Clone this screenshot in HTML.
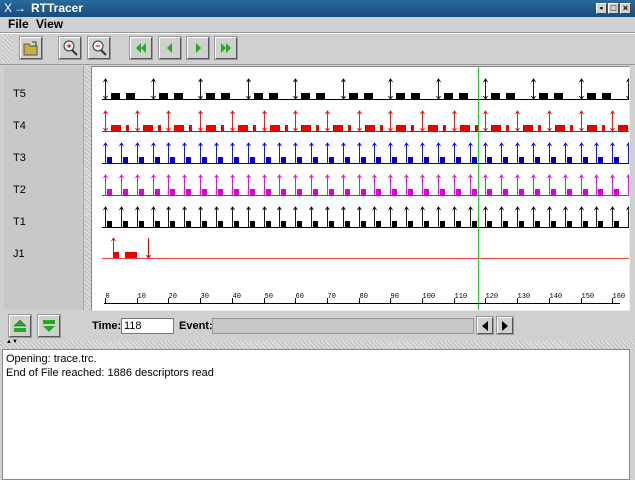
<!DOCTYPE html>
<html><head><meta charset="utf-8"><style>
*{box-sizing:border-box;margin:0;padding:0}
body{width:635px;height:480px;background:#d0d0d0;font-family:"Liberation Sans",sans-serif;font-size:11px;position:relative;overflow:hidden}
.abs{position:absolute}
.title{left:0;top:0;width:635px;height:17px;background:linear-gradient(#2a6a9c,#164d7e);color:#fff;font-weight:bold;font-size:12px}
.btn{position:absolute;width:22px;height:22px;border:1px solid #fff;border-right-color:#555;border-bottom-color:#555;background:#d0d0d0;outline:1px solid #999}
.wb{position:absolute;top:3px;width:11px;height:11px;background:#d0d0d0;border:1px solid #fff;border-right-color:#444;border-bottom-color:#444;font-size:9px;line-height:9px;text-align:center;color:#000;font-weight:bold}
.lbl{position:absolute;left:9px;font-size:11px}
</style></head><body>
<div class="abs title"><span style="position:absolute;left:4px;top:1px;font-weight:normal">X</span><span style="position:absolute;left:14px;top:1px">→</span><span style="position:absolute;left:31px;top:1px">RTTracer</span>
<div class="wb" style="left:596px">▪</div><div class="wb" style="left:608px">□</div><div class="wb" style="left:620px">×</div></div>
<div class="abs" style="left:8px;top:17px;font-weight:bold;font-size:12px">File</div>
<div class="abs" style="left:36px;top:17px;font-weight:bold;font-size:12px">View</div>
<div class="abs" style="left:0;top:32px;width:635px;height:1px;background:#999"></div>
<div class="abs" style="left:0;top:33px;width:635px;height:1px;background:#fff"></div>
<div class="abs" style="left:2px;top:35px;width:10px;height:28px;background:repeating-linear-gradient(45deg,#bbb 0 1px,#ddd 1px 3px)"></div>
<div class="btn" style="left:20px;top:37px"><svg width="20" height="20"><path d="M3 6h5l1 2h7v9H3z" fill="#c8b040" stroke="#555"/><path d="M11 4l4 0 0 4" fill="none" stroke="#333"/></svg></div>
<div class="btn" style="left:59px;top:37px"><svg width="20" height="20"><circle cx="9" cy="8" r="5" fill="#eee" stroke="#333"/><path d="M12 12l5 5" stroke="#333" stroke-width="2"/><path d="M7 8h4M9 6v4" stroke="#c00"/></svg></div>
<div class="btn" style="left:88px;top:37px"><svg width="20" height="20"><circle cx="9" cy="8" r="5" fill="#eee" stroke="#333"/><path d="M12 12l5 5" stroke="#333" stroke-width="2"/><path d="M7 8h4" stroke="#c00"/></svg></div>
<div class="btn" style="left:130px;top:37px"><svg width="20" height="20"><path d="M10 5l-5 5 5 5zM15 5l-5 5 5 5z" fill="#2a2"/></svg></div>
<div class="btn" style="left:159px;top:37px"><svg width="20" height="20"><path d="M12 5l-5 5 5 5z" fill="#2a2"/></svg></div>
<div class="btn" style="left:187px;top:37px"><svg width="20" height="20"><path d="M8 5l5 5-5 5z" fill="#2a2"/></svg></div>
<div class="btn" style="left:215px;top:37px"><svg width="20" height="20"><path d="M5 5l5 5-5 5zM10 5l5 5-5 5z" fill="#2a2"/></svg></div>
<div class="abs" style="left:0;top:64px;width:635px;height:1px;background:#999"></div>
<div class="abs" style="left:4px;top:66px;width:80px;height:244px;background:#c8c8c8;border-right:1px solid #aaa">
<div class="lbl" style="top:22px">T5</div><div class="lbl" style="top:54px">T4</div><div class="lbl" style="top:86px">T3</div><div class="lbl" style="top:118px">T2</div><div class="lbl" style="top:150px">T1</div><div class="lbl" style="top:182px">J1</div></div>
<div class="abs" style="left:85px;top:66px;width:6px;height:244px;background:repeating-linear-gradient(45deg,#bbb 0 1px,#ddd 1px 3px)"></div>
<div class="abs" style="left:91px;top:66px;width:539px;height:245px;background:#fff;border:1px solid #888;border-right-color:#eee;border-bottom-color:#eee">
<svg id="ch" width="537" height="243" style="position:absolute;left:0;top:0" shape-rendering="crispEdges"></svg></div>
<div class="btn" style="left:9px;top:315px"><svg width="20" height="20"><path d="M10 4l6 6H4z" fill="#2a2" stroke="#333" stroke-width=".5"/><rect x="4" y="12" width="12" height="4" fill="#2a2"/></svg></div>
<div class="btn" style="left:38px;top:315px"><svg width="20" height="20"><rect x="4" y="4" width="12" height="4" fill="#2a2"/><path d="M10 16l6-6H4z" fill="#2a2"/></svg></div>
<div class="abs" style="left:92px;top:320px;font-weight:bold">Time:</div>
<div class="abs" style="left:121px;top:318px;width:53px;height:16px;background:#fff;border:1px solid #777;font-size:11px;padding:1px 2px">118</div>
<div class="abs" style="left:179px;top:320px;font-weight:bold">Event:</div>
<div class="abs" style="left:212px;top:318px;width:262px;height:16px;background:#c8c8c8;border:1px solid #999"></div>
<div class="btn" style="left:477px;top:317px;width:16px;height:17px"><svg width="14" height="15"><path d="M10 3l-6 5 6 5z"/></svg></div>
<div class="btn" style="left:497px;top:317px;width:16px;height:17px"><svg width="14" height="15"><path d="M4 3l6 5-6 5z"/></svg></div>
<div class="abs" style="left:0;top:341px;width:635px;height:8px;background:repeating-linear-gradient(45deg,#bbb 0 1px,#ddd 1px 3px)"><span style="position:absolute;left:6px;top:-2px;font-size:6px">▲▼</span></div>
<div class="abs" style="left:2px;top:349px;width:628px;height:131px;background:#fff;border:1px solid #888;padding:2px 3px;line-height:14px">Opening: trace.trc.<br>End of File reached: 1886 descriptors read</div>
<script>
var s='',X=function(t){return Math.round(13+t*3.17)+0.5};
function arr(x,b,c,dbl){s+='<path d="M'+x+' '+(b-20)+'V'+b+'M'+(x-2)+' '+(b-17)+'L'+x+' '+(b-20)+'L'+(x+2)+' '+(b-17)+(dbl?'M'+(x-2)+' '+(b-3)+'L'+x+' '+b+'L'+(x+2)+' '+(b-3):'')+'" stroke="'+c+'" fill="none" shape-rendering="auto" stroke-width="0.9"/>';}
function blk(x,b,w,c){s+='<rect x="'+Math.round(x)+'" y="'+(b-6)+'" width="'+w+'" height="6" fill="'+c+'"/>';}
function line(b,c){s+='<path d="M10 '+(b+.5)+'H537" stroke="'+c+'"/>';}
var b=32;line(b,'#000');for(var t=0;t<170;t+=15){var x=X(t);arr(x,b,'#000',1);blk(x+5,b,9,'#000');blk(x+20,b,9,'#000');}
b=64;line(b,'#e00');for(t=0;t<170;t+=10){x=X(t);arr(x,b,'#e00',1);blk(x+5,b,10,'#e00');blk(x+20,b,3,'#e00');}
b=96;line(b,'#00c');for(t=0;t<170;t+=5){x=X(t);arr(x,b,'#00c');blk(x+1,b,5,'#00c');}
b=128;line(b,'#d0d');for(t=0;t<170;t+=5){x=X(t);arr(x,b,'#d0d');blk(x+1,b,5,'#d0d');}
b=160;line(b,'#000');for(t=0;t<170;t+=5){x=X(t);arr(x,b,'#000');blk(x+1,b,5,'#000');}
b=191;line(b,'#e44');arr(21.5,b,'#e00');blk(21,b,6,'#e00');blk(33,b,12,'#e00');s+='<path d="M56.5 '+(b-20)+'V'+b+'M54.5 '+(b-3)+'L56.5 '+b+'L58.5 '+(b-3)+'" stroke="#e00" fill="none"/>';
s+='<path d="M386.5 0V243" stroke="#2c2"/>';
s+='<path d="M12 236.5H528" stroke="#000"/>';
for(t=0;t<=160;t+=10){x=X(t);s+='<path d="M'+x+' 231V236" stroke="#000"/><text x="'+x+'" y="231" font-size="7" font-family="Liberation Mono" >'+t+'</text>';}
document.getElementById('ch').innerHTML=s;
</script>
</body></html>
